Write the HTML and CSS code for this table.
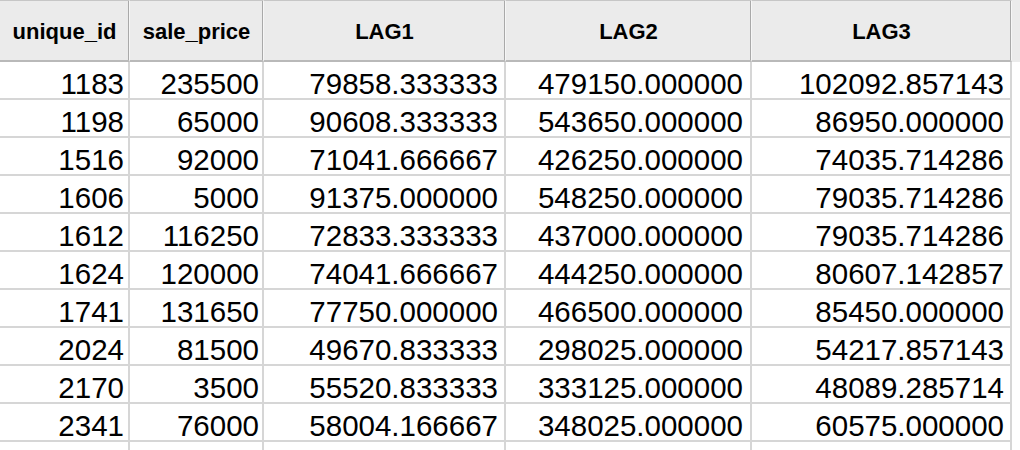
FILE: index.html
```html
<!DOCTYPE html>
<html lang="en">
<head>
<meta charset="utf-8">
<title>Lag table</title>
<link rel="stylesheet" href="styles.css">
</head>
<body>
<div class="grid">
  <div class="hd">unique_id</div>
  <div class="hd">sale_price</div>
  <div class="hd">LAG1</div>
  <div class="hd">LAG2</div>
  <div class="hd">LAG3</div>
  <div class="hd filler"></div>

  <div class="c c1">1183</div><div class="c c2">235500</div><div class="c c3">79858.333333</div><div class="c c4">479150.000000</div><div class="c c5">102092.857143</div><div class="f"></div>
  <div class="c c1">1198</div><div class="c c2">65000</div><div class="c c3">90608.333333</div><div class="c c4">543650.000000</div><div class="c c5">86950.000000</div><div class="f"></div>
  <div class="c c1">1516</div><div class="c c2">92000</div><div class="c c3">71041.666667</div><div class="c c4">426250.000000</div><div class="c c5">74035.714286</div><div class="f"></div>
  <div class="c c1">1606</div><div class="c c2">5000</div><div class="c c3">91375.000000</div><div class="c c4">548250.000000</div><div class="c c5">79035.714286</div><div class="f"></div>
  <div class="c c1">1612</div><div class="c c2">116250</div><div class="c c3">72833.333333</div><div class="c c4">437000.000000</div><div class="c c5">79035.714286</div><div class="f"></div>
  <div class="c c1">1624</div><div class="c c2">120000</div><div class="c c3">74041.666667</div><div class="c c4">444250.000000</div><div class="c c5">80607.142857</div><div class="f"></div>
  <div class="c c1">1741</div><div class="c c2">131650</div><div class="c c3">77750.000000</div><div class="c c4">466500.000000</div><div class="c c5">85450.000000</div><div class="f"></div>
  <div class="c c1">2024</div><div class="c c2">81500</div><div class="c c3">49670.833333</div><div class="c c4">298025.000000</div><div class="c c5">54217.857143</div><div class="f"></div>
  <div class="c c1">2170</div><div class="c c2">3500</div><div class="c c3">55520.833333</div><div class="c c4">333125.000000</div><div class="c c5">48089.285714</div><div class="f"></div>
  <div class="c c1">2341</div><div class="c c2">76000</div><div class="c c3">58004.166667</div><div class="c c4">348025.000000</div><div class="c c5">60575.000000</div><div class="f"></div>
  <div class="c c1"></div><div class="c c2"></div><div class="c c3"></div><div class="c c4"></div><div class="c c5"></div><div class="f"></div>
</div>
</body>
</html>
```

FILE: styles.css
```css
html, body {
  margin: 0;
  padding: 0;
  background: #ffffff;
  overflow: hidden;
}

body {
  width: 1020px;
  height: 450px;
  font-family: "Liberation Sans", Arial, Helvetica, sans-serif;
  color: #000000;
}

.grid {
  display: grid;
  grid-template-columns: 130px 134px 242px 246px 260px 8px;
  grid-template-rows: 62px;
  grid-auto-rows: 38px;
  height: 450px;
  overflow: hidden;
}

.hd {
  box-sizing: border-box;
  height: 62px;
  background: #ebebeb;
  border-top: 1px solid #c6c6c6;
  border-bottom: 2px solid #b9b9b9;
  border-right: 1px solid #f6f6f6;
  box-shadow: inset -1px 0 0 #a9a9a9;
  font-weight: bold;
  font-size: 22px;
  line-height: 56px;
  padding-top: 3px;
  text-align: center;
  white-space: nowrap;
}

.hd.filler {
  border: none;
  box-shadow: none;
  background: #ebebeb;
}

.c {
  box-sizing: border-box;
  height: 38px;
  border-right: 2px solid #d6d6d6;
  border-bottom: 2px solid #d6d6d6;
  font-size: 29.5px;
  line-height: 28px;
  padding-top: 8px;
  text-align: right;
  white-space: nowrap;
  overflow: hidden;
}

.c1 { padding-right: 4px; }
.c2 { padding-right: 3px; }
.c3 { padding-right: 6px; }
.c4 { padding-right: 7px; }
.c5 { padding-right: 6px; }

.f {
  background: #ffffff;
}
```
